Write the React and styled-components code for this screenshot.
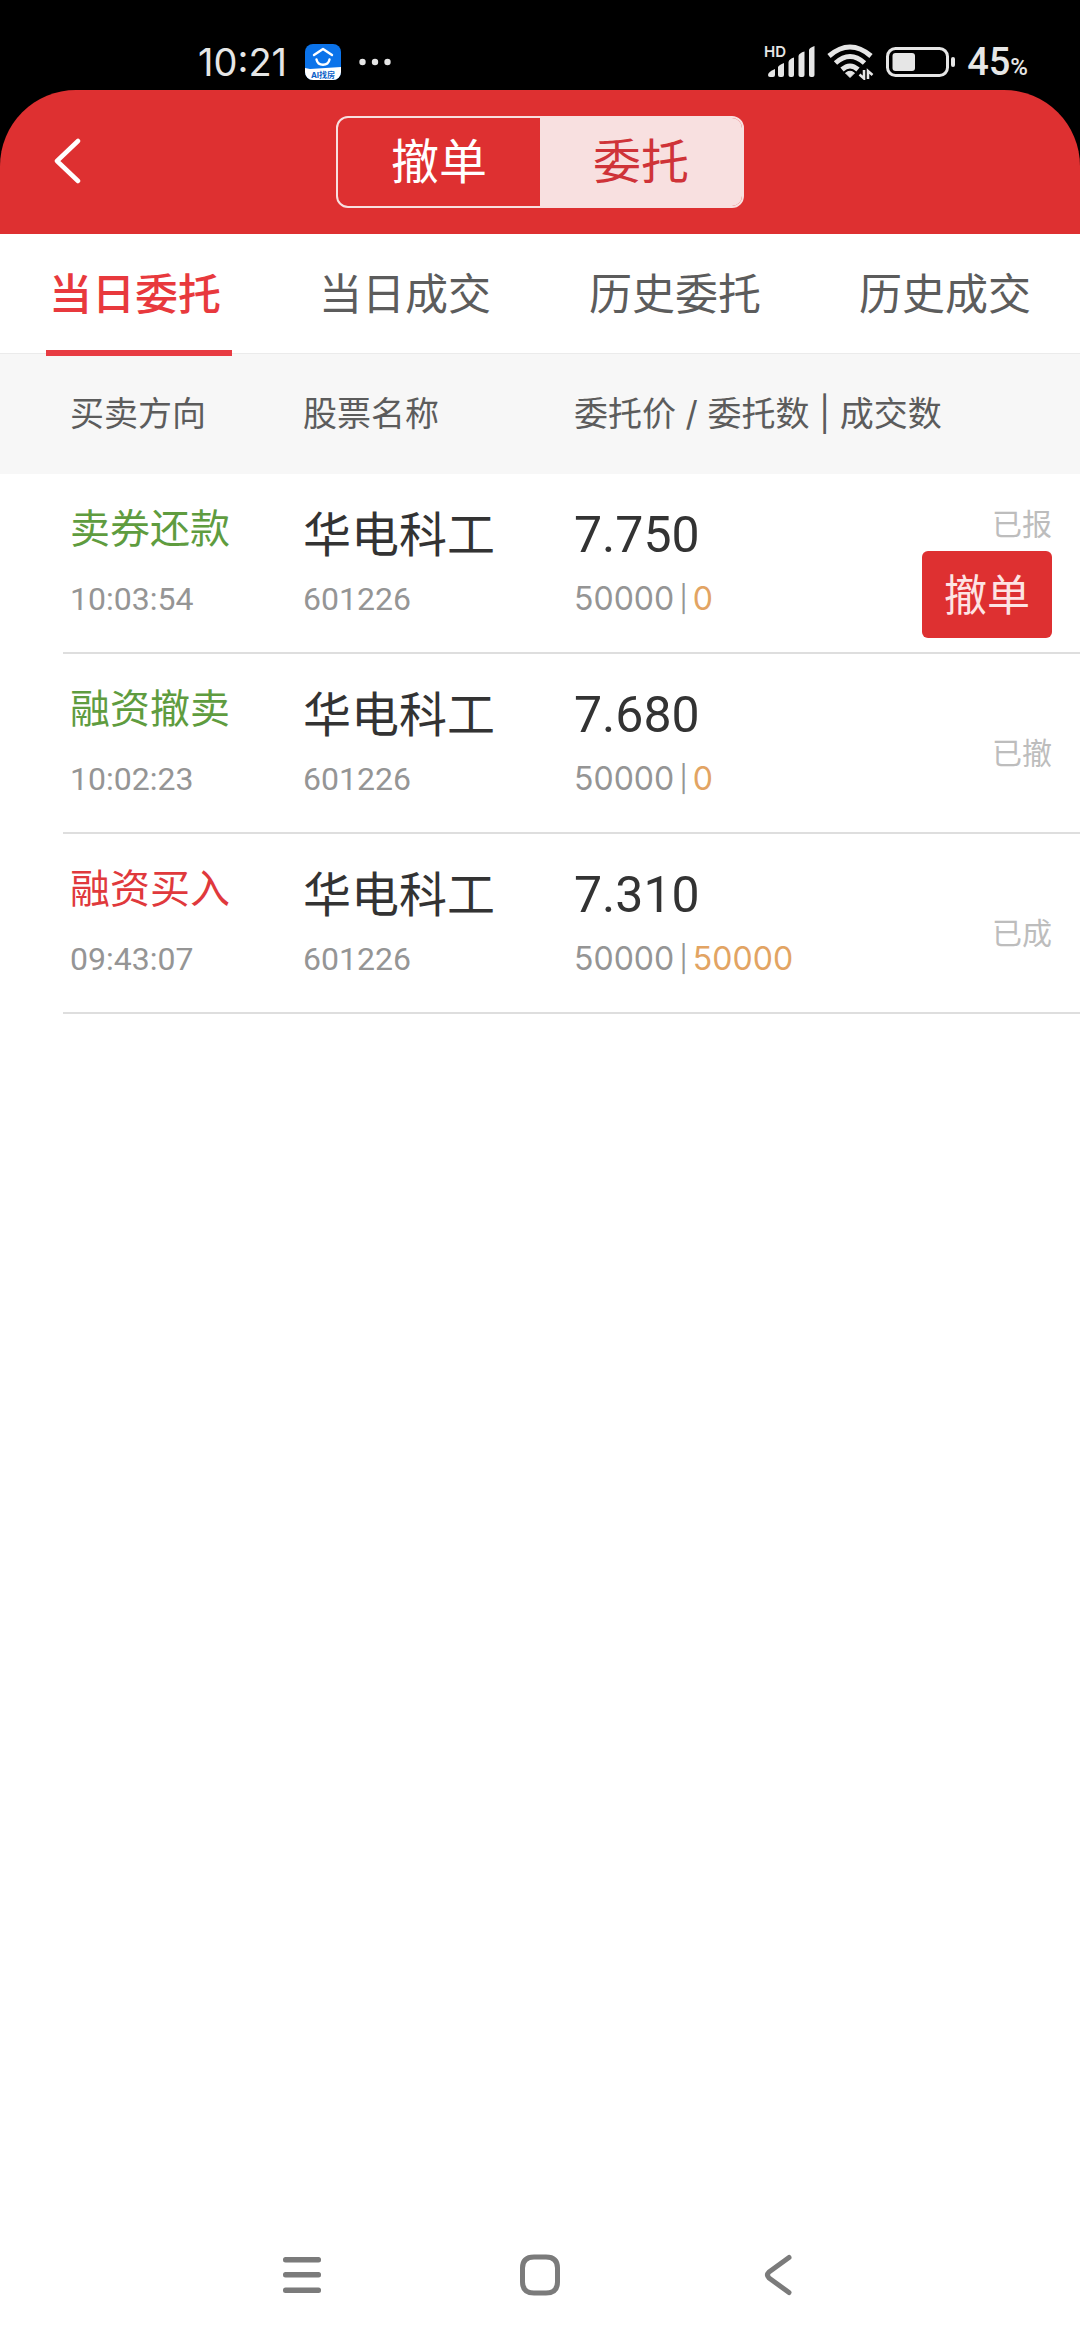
import React, { useState } from "react";
import styled, { createGlobalStyle } from "styled-components";

const cjk = `"Noto Sans CJK SC", sans-serif`;

const GlobalStyle = createGlobalStyle`
  * {
    box-sizing: border-box;
  }
  body {
    margin: 0;
    background: #fff;
    font-family: Inter, ${cjk};
  }
  button {
    margin: 0;
    padding: 0;
    border: 0;
    background: none;
    font-family: inherit;
    cursor: pointer;
  }
  svg {
    display: block;
  }
`;

const Page = styled.div`
  display: flex;
  flex-direction: column;
  min-height: 100vh;
`;

const Top = styled.div`
  background: #000;
`;

const StatusBar = styled.div`
  display: flex;
  align-items: center;
  justify-content: space-between;
  height: 90px;
  padding: 34px 52px 0 198px;
  color: #e6e6e6;
`;

const StatusGroup = styled.div`
  display: flex;
  align-items: center;
  gap: ${(props) => props.$gap}px;
`;

const Clock = styled.span`
  font-size: 38px;
  line-height: 48px;
`;

const Level = styled.span`
  display: flex;
  align-items: baseline;
  font-family: Roboto, sans-serif;
  font-size: 38px;
  font-weight: 500;
  line-height: 48px;
`;

const Percent = styled.span`
  font-size: 24px;
  line-height: 24px;
`;

const AppBar = styled.header`
  display: grid;
  grid-template-columns: 1fr auto 1fr;
  align-items: center;
  height: 144px;
  padding: 0 50px;
  background: #de3031;
  border-radius: 76px 76px 0 0;
`;

const BackButton = styled.button`
  justify-self: start;
`;

const Segment = styled.div`
  display: flex;
  overflow: hidden;
  border: 2px solid #f8e0e0;
  border-radius: 12px;
`;

const SegmentButton = styled.button`
  width: 202px;
  font-size: 48px;
  line-height: 88px;
  color: ${(props) => (props.$active ? "#cf3338" : "#fff")};
  background: ${(props) => (props.$active ? "#f8e0e0" : "transparent")};
`;

const Tabs = styled.nav`
  display: grid;
  grid-template-columns: repeat(4, 1fr);
  height: 120px;
  border-bottom: 1px solid #ebebeb;
`;

const Tab = styled.button`
  position: relative;
  font-size: 43px;
  line-height: 120px;
  font-weight: ${(props) => (props.$active ? 500 : 400)};
  color: ${(props) => (props.$active ? "#e8393d" : "#5c5c5c")};

  &::after {
    content: "";
    display: ${(props) => (props.$active ? "block" : "none")};
    position: absolute;
    left: 17%;
    right: 14%;
    bottom: -2px;
    height: 6px;
    background: #e83c43;
  }
`;

const Table = styled.table`
  display: block;
`;

const Head = styled.thead`
  display: block;
  background: #f7f7f7;
`;

const Body = styled.tbody`
  display: block;
`;

const Row = styled.tr`
  display: grid;
  grid-template-columns: minmax(0, 233fr) minmax(0, 271fr) minmax(0, 300fr) minmax(0, 206fr);
  margin-left: 63px;
  padding-left: 7px;
`;

const OrderRow = styled(Row)`
  height: 180px;
  border-bottom: 2px solid #dedede;
`;

const HeadCell = styled.th`
  padding: 0;
  font-size: 34px;
  font-weight: 400;
  line-height: 120px;
  text-align: left;
  white-space: nowrap;
  color: #5c5c5c;
`;

const Cell = styled.td`
  display: grid;
  grid-template-rows: 72px 48px;
  align-content: start;
  row-gap: 4px;
  padding: 25px 0 0;
  white-space: nowrap;
`;

const Direction = styled.span`
  font-size: 40px;
  line-height: 60px;
  color: ${(props) => (props.$sell ? "#5f9c3f" : "#e0393c")};
`;

const Name = styled.span`
  font-size: 48px;
  line-height: 72px;
  color: #333;
`;

const Price = styled.span`
  font-family: Roboto, sans-serif;
  font-size: 50px;
  line-height: 72px;
  color: #333;
`;

const Sub = styled.span`
  font-family: Roboto, sans-serif;
  font-size: 32px;
  line-height: 48px;
  color: #959595;
`;

const Amount = styled(Sub)`
  display: flex;
  align-items: center;
  gap: 5px;
  font-family: Inter, sans-serif;
`;

const Bar = styled.span`
  font-size: 26px;
`;

const Filled = styled.span`
  color: #e2a463;
`;

const StatusCell = styled.td`
  display: flex;
  flex-direction: column;
  align-items: flex-end;
  justify-content: center;
  gap: 9px;
  padding: 32px 28px 12px 0;
`;

const Status = styled.span`
  font-size: 30px;
  line-height: 36px;
  color: #bdbdbd;
`;

const CancelButton = styled.button`
  width: 130px;
  height: 87px;
  margin-bottom: 4px;
  border-radius: 6px;
  font-size: 43px;
  line-height: 84px;
  color: #fde4e4;
  background: #de3031;
`;

const SystemNav = styled.footer`
  display: grid;
  grid-template-columns: repeat(3, 22%);
  justify-content: center;
  height: 130px;
  margin-top: auto;
`;

const NavButton = styled.button`
  display: flex;
  align-items: center;
  justify-content: center;
`;

const AppIcon = () => (
  <svg width="36" height="36" viewBox="0 0 36 36">
    <rect width="36" height="36" rx="8" fill="#0b73ea" />
    <path d="M0 24 L5 25 L36 23 V28 A8 8 0 0 1 28 36 H8 A8 8 0 0 1 0 28 Z" fill="#fff" />
    <path
      d="M9 11 L18 5 L27 11"
      fill="none"
      stroke="#fff"
      strokeWidth="2.4"
      strokeLinecap="round"
      strokeLinejoin="round"
    />
    <path
      d="M11.500 15.500 C13 22.500 23 22.500 24.500 15.500"
      fill="none"
      stroke="#fff"
      strokeWidth="2.4"
      strokeLinecap="round"
    />
    <text x="18" y="34" textAnchor="middle" fontSize="8" fontWeight="700" fill="#0b5fc8">
      AI找房
    </text>
  </svg>
);

const Dots = () => (
  <svg width="32" height="8" viewBox="0 0 32 8" fill="#e6e6e6">
    <circle cx="3.5" cy="4" r="3.2" />
    <circle cx="16" cy="4" r="3.2" />
    <circle cx="28.5" cy="4" r="3.2" />
  </svg>
);

const Signal = () => (
  <svg width="52" height="46" viewBox="-2 -6 52 46" fill="#e6e6e6">
    <text x="-1" y="12" fontSize="15" fontWeight="600">
      HD
    </text>
    <path d="M3 30 Q3 27 10 24 V30 Q10 32 8 32 H5 Q3 32 3 30 Z" />
    <path d="M13 22 Q14 20 19 18 V30 Q19 32 17 32 H15 Q13 32 13 30 Z" />
    <path d="M23.500 17 Q24 14 29 12.500 V30 Q29 32 27 32 H25.500 Q23.500 32 23.500 30 Z" />
    <path d="M33.500 11 Q34 8 39.500 6.500 V30 Q39.500 32 37.500 32 H35.500 Q33.500 32 33.500 30 Z" />
    <path d="M44 5 Q44 3 49.500 1 V30 Q49.500 32 47.500 32 H46 Q44 32 44 30 Z" />
  </svg>
);

const Wifi = () => (
  <svg width="47" height="36" viewBox="0 0 47 36" fill="none" stroke="#e6e6e6">
    <path d="M2 12 Q23 -6 44 12" strokeWidth="5" />
    <path d="M8.500 19 Q23 6 37.500 19" strokeWidth="5" />
    <path d="M15 25.500 Q23 18.500 31 25.500" strokeWidth="5" />
    <path d="M18.500 29 Q23 25.500 27.500 29 L23 33.500 Z" fill="#e6e6e6" strokeWidth="1" />
    <path d="M37 26 V34.500 L32.500 30.500" strokeWidth="2.500" />
    <path d="M41 35 V27 L45.500 31" strokeWidth="2.500" />
  </svg>
);

const Battery = () => (
  <svg width="69" height="30" viewBox="0 0 69 30">
    <rect
      x="1.500"
      y="1.500"
      width="60"
      height="27"
      rx="8"
      fill="none"
      stroke="#e6e6e6"
      strokeWidth="3"
    />
    <rect x="6.500" y="6" width="22.500" height="18" rx="3" fill="#e6e6e6" />
    <rect x="65" y="10" width="4" height="10" rx="2" fill="#e6e6e6" />
  </svg>
);

const tabs = ["当日委托", "当日成交", "历史委托", "历史成交"];

const orders = [
  {
    direction: "卖券还款",
    sell: true,
    time: "10:03:54",
    name: "华电科工",
    code: "601226",
    price: "7.750",
    amount: "50000",
    filled: "0",
    status: "已报",
    canCancel: true,
  },
  {
    direction: "融资撤卖",
    sell: true,
    time: "10:02:23",
    name: "华电科工",
    code: "601226",
    price: "7.680",
    amount: "50000",
    filled: "0",
    status: "已撤",
  },
  {
    direction: "融资买入",
    sell: false,
    time: "09:43:07",
    name: "华电科工",
    code: "601226",
    price: "7.310",
    amount: "50000",
    filled: "50000",
    status: "已成",
  },
];

const App = () => {
  const [mode, setMode] = useState("委托");
  const [tab, setTab] = useState(tabs[0]);

  return (
    <Page>
      <GlobalStyle />
      <Top>
        <StatusBar>
          <StatusGroup $gap={18}>
            <Clock>10:21</Clock>
            <AppIcon />
            <Dots />
          </StatusGroup>
          <StatusGroup $gap={12}>
            <Signal />
            <Wifi />
            <Battery />
            <Level>
              45<Percent>%</Percent>
            </Level>
          </StatusGroup>
        </StatusBar>
        <AppBar>
          <BackButton aria-label="返回">
            <svg width="34" height="48" viewBox="0 0 34 48">
              <path
                d="M28 3 L7 23 L28 43"
                fill="none"
                stroke="#fff"
                strokeWidth="4.500"
                strokeLinecap="round"
                strokeLinejoin="round"
              />
            </svg>
          </BackButton>
          <Segment>
            {["撤单", "委托"].map((item) => (
              <SegmentButton key={item} $active={item === mode} onClick={() => setMode(item)}>
                {item}
              </SegmentButton>
            ))}
          </Segment>
        </AppBar>
      </Top>

      <Tabs>
        {tabs.map((item) => (
          <Tab key={item} $active={item === tab} onClick={() => setTab(item)}>
            {item}
          </Tab>
        ))}
      </Tabs>

      <Table>
        <Head>
          <Row>
            <HeadCell>买卖方向</HeadCell>
            <HeadCell>股票名称</HeadCell>
            <HeadCell>委托价 / 委托数 | 成交数</HeadCell>
          </Row>
        </Head>
        <Body>
          {orders.map((order) => (
            <OrderRow key={order.time}>
              <Cell>
                <Direction $sell={order.sell}>{order.direction}</Direction>
                <Sub>{order.time}</Sub>
              </Cell>
              <Cell>
                <Name>{order.name}</Name>
                <Sub>{order.code}</Sub>
              </Cell>
              <Cell>
                <Price>{order.price}</Price>
                <Amount>
                  {order.amount}
                  <Bar>|</Bar>
                  <Filled>{order.filled}</Filled>
                </Amount>
              </Cell>
              <StatusCell>
                <Status>{order.status}</Status>
                {order.canCancel && <CancelButton>撤单</CancelButton>}
              </StatusCell>
            </OrderRow>
          ))}
        </Body>
      </Table>

      <SystemNav>
        <NavButton aria-label="菜单">
          <svg width="40" height="42" viewBox="0 0 40 42" fill="#7b7b7b">
            <rect x="1" y="3" width="38" height="5.500" rx="2.500" />
            <rect x="1" y="18" width="38" height="5.500" rx="2.500" />
            <rect x="1" y="33.500" width="38" height="5.500" rx="2.500" />
          </svg>
        </NavButton>
        <NavButton aria-label="主页">
          <svg width="42" height="42" viewBox="0 0 42 42">
            <path
              d="M21 3 H27 Q38.500 3 38.500 14 V28 Q38.500 39 27 39 H15 Q3.500 39 3.500 28 V14 Q3.500 3 15 3 Z"
              fill="none"
              stroke="#7b7b7b"
              strokeWidth="5"
            />
          </svg>
        </NavButton>
        <NavButton aria-label="后退">
          <svg width="28" height="42" viewBox="0 0 28 42">
            <path
              d="M25 3.500 L5 18 Q2 21 5 24 L25 38.500"
              fill="none"
              stroke="#7b7b7b"
              strokeWidth="5"
              strokeLinecap="round"
              strokeLinejoin="round"
            />
          </svg>
        </NavButton>
      </SystemNav>
    </Page>
  );
};

export default App;
